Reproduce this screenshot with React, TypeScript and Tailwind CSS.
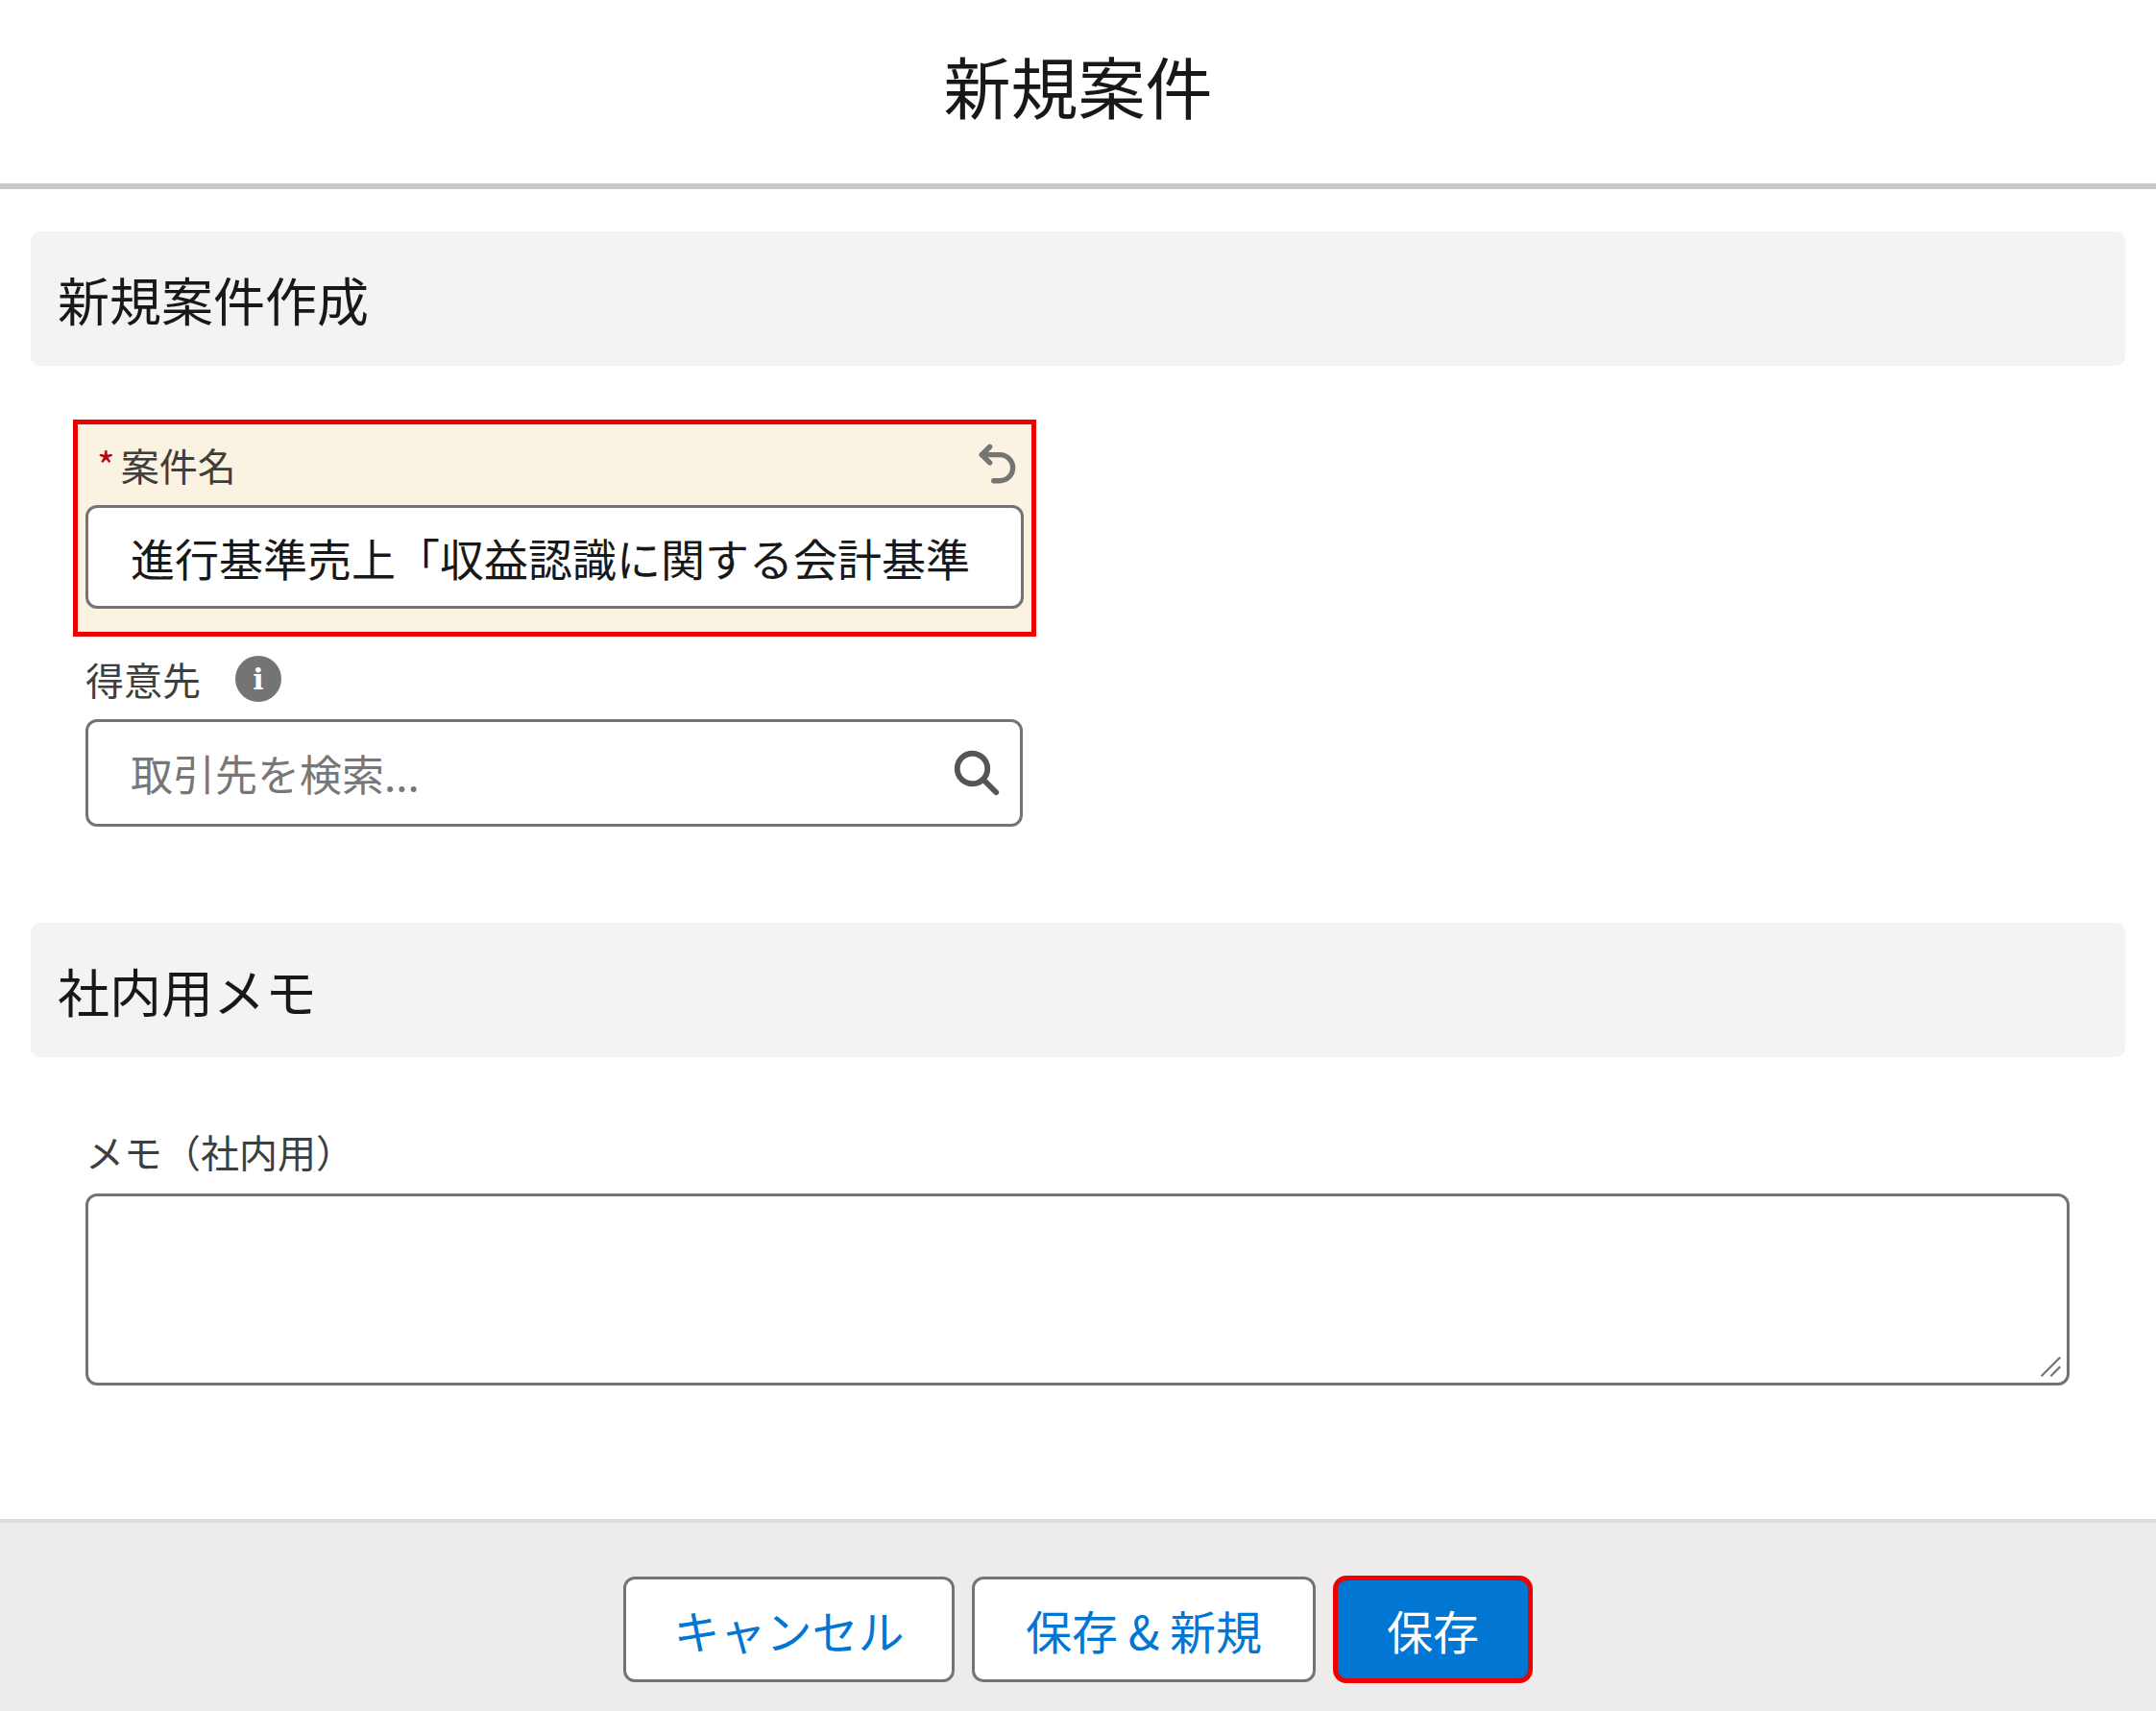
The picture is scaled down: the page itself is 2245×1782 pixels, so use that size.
import React from 'react';

const font = { fontFamily: '"Noto Sans CJK JP", "Noto Sans", sans-serif' };

function UndoIcon() {
  return (
    <svg viewBox="0 0 24 24" className="w-[50px] h-[50px]" fill="none" stroke="#747474" strokeWidth="2.6" strokeLinecap="round" strokeLinejoin="round">
      <path d="M8 3L4 7l4 4" />
      <path d="M4 7h9a6.5 6.5 0 0 1 0 13h-3" />
    </svg>
  );
}

function SearchIcon() {
  return (
    <svg viewBox="0 0 24 24" className="w-[54px] h-[54px]" fill="none" stroke="#555" strokeWidth="2.6" strokeLinecap="round">
      <circle cx="10" cy="10" r="7" />
      <path d="M15 15l6 6" />
    </svg>
  );
}

function SectionHeader({ title }: { title: string }) {
  return (
    <div className="mx-[32px] h-[140px] bg-[#f3f3f3] rounded-[10px] flex items-center px-[28px]">
      <span className="text-[54px] text-[#181818]">{title}</span>
    </div>
  );
}

export default function App() {
  return (
    <div style={font} className="w-[2245px] h-[1782px] bg-white flex flex-col overflow-hidden">
      <div className="h-[191px] flex items-center justify-center pb-[14px]">
        <span className="text-[70px] text-[#181818]">新規案件</span>
      </div>
      <div className="h-[6px] bg-[#c9c9c9]" />

      <div className="flex-1 pt-[44px]">
        <SectionHeader title="新規案件作成" />

        <div className="mt-[56px] ml-[76px] w-[1003px] h-[226px] border-[5px] border-[#ee0000] bg-[#fbf3e1] px-[8px] pt-[16px]">
          <div className="flex items-center justify-between h-[52px] pl-[12px] pr-[2px]">
            <span className="text-[40px] text-[#3e3e3c]">
              <span className="text-[#ba0517] mr-[6px]">*</span>案件名
            </span>
            <UndoIcon />
          </div>
          <div className="mt-[16px] h-[108px] bg-white border-[3px] border-[#747474] rounded-[12px] flex items-center px-[44px]">
            <span className="text-[46px] text-[#181818] whitespace-nowrap overflow-hidden">進行基準売上「収益認識に関する会計基準</span>
          </div>
        </div>

        <div className="ml-[89px] w-[976px] mt-[14px]">
          <div className="flex items-center h-[60px] gap-[36px]">
            <span className="text-[40px] text-[#3e3e3c]">得意先</span>
            <span className="w-[48px] h-[48px] rounded-full bg-[#747474] text-white flex items-center justify-center text-[30px] font-bold" style={{ fontFamily: '"DejaVu Serif", serif' }}>i</span>
          </div>
          <div className="mt-[12px] h-[112px] bg-white border-[3px] border-[#747474] rounded-[12px] flex items-center justify-between pl-[44px] pr-[18px]">
            <span className="text-[44px] text-[#777]">取引先を検索...</span>
            <SearchIcon />
          </div>
        </div>

        <div className="mt-[100px]">
          <SectionHeader title="社内用メモ" />
        </div>

        <div className="ml-[89px] mr-[90px] mt-[70px]">
          <div className="text-[40px] text-[#3e3e3c] h-[56px] flex items-center">メモ（社内用）</div>
          <div className="relative mt-[16px] h-[200px] bg-white border-[3px] border-[#747474] rounded-[12px]">
            <svg viewBox="0 0 20 20" className="absolute right-[4px] bottom-[4px] w-[28px] h-[28px]" stroke="#777" strokeWidth="1.6">
              <path d="M18 4L4 18M18 11l-7 7" />
            </svg>
          </div>
        </div>
      </div>

      <div className="h-[200px] bg-[#edeceb] border-t-[4px] border-[#dcdcdc] flex items-center justify-center gap-[18px] pt-[26px]">
        <button className="w-[345px] h-[110px] bg-white border-[3px] border-[#747474] rounded-[12px] text-[48px] text-[#0176d3]">キャンセル</button>
        <button className="w-[358px] h-[110px] bg-white border-[3px] border-[#747474] rounded-[12px] text-[48px] text-[#0176d3]">保存 &amp; 新規</button>
        <button className="w-[208px] h-[112px] bg-[#0176d3] border-[5px] border-[#ee0000] rounded-[14px] text-[48px] text-white">保存</button>
      </div>
    </div>
  );
}
